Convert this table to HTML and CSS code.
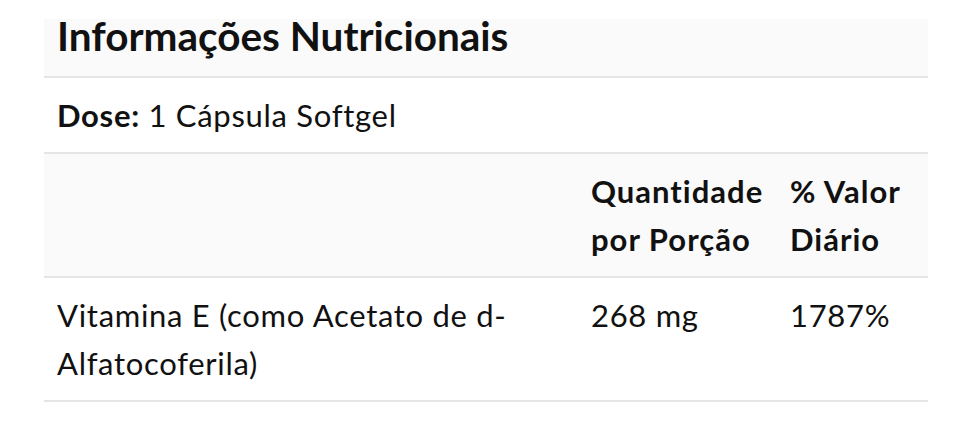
FILE: index.html
```html
<!DOCTYPE html>
<html lang="pt">
<head>
<meta charset="utf-8">
<title>Informações Nutricionais</title>
<link rel="stylesheet" href="styles.css">
</head>
<body>
<section class="nutrition">
  <h2 class="nutrition-title">Informações Nutricionais</h2>
  <div class="dose"><strong>Dose:</strong> 1 Cápsula Softgel</div>
  <table class="facts">
    <thead>
      <tr>
        <th class="col-name"></th>
        <th class="col-qty">Quantidade por Porção</th>
        <th class="col-dv">% Valor Diário</th>
      </tr>
    </thead>
    <tbody>
      <tr>
        <td class="col-name">Vitamina E (como Acetato de d-Alfatocoferila)</td>
        <td class="col-qty">268 mg</td>
        <td class="col-dv">1787%</td>
      </tr>
    </tbody>
  </table>
</section>
</body>
</html>
```

FILE: styles.css
```css
html, body {
  margin: 0;
  padding: 0;
  background: #ffffff;
}

body {
  font-family: Lato, "Open Sans", sans-serif;
  color: #111111;
}

.nutrition {
  width: 884px;
  margin: 19px 0 0 44px;
}

.nutrition-title {
  margin: 0;
  background: #fafafa;
  font-size: 40.5px;
  font-weight: 700;
  line-height: 34px;
  padding: 0 13px 23px;
  border-bottom: 2px solid #e5e5e5;
}

.dose {
  font-size: 31px;
  letter-spacing: 0.7px;
  line-height: 48px;
  padding: 13px 13px;
  border-bottom: 2px solid #e5e5e5;
}

.dose strong {
  font-weight: 700;
}

.facts {
  width: 100%;
  border-collapse: collapse;
  font-size: 31px;
  letter-spacing: 0.7px;
  line-height: 48px;
}

.facts th,
.facts td {
  text-align: left;
  vertical-align: top;
  padding: 13px 13px;
  border-bottom: 2px solid #e5e5e5;
}

.facts thead tr {
  background: #fafafa;
}

.facts th {
  font-weight: 700;
  letter-spacing: 1px;
}

.col-name { width: 508px; }
.col-qty { width: 173px; }
.col-dv { width: 125px; }
```
